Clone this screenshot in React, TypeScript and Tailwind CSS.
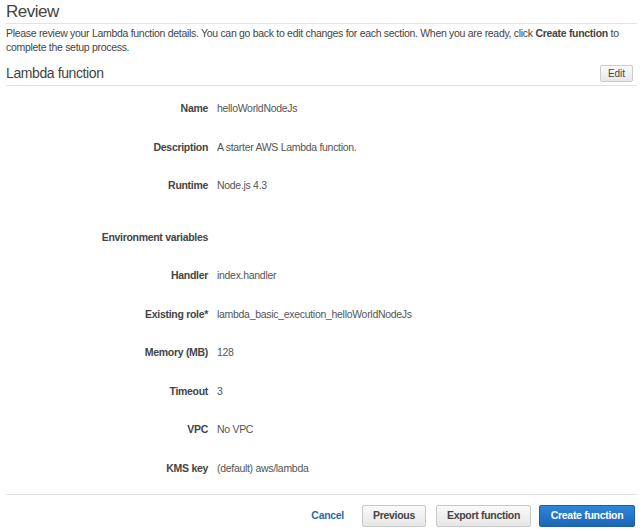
import React from "react";

const rows: { label: string; value: string; extra?: boolean }[] = [
  { label: "Name", value: "helloWorldNodeJs" },
  { label: "Description", value: "A starter AWS Lambda function." },
  { label: "Runtime", value: "Node.js 4.3" },
  { label: "Environment variables", value: "", extra: true },
  { label: "Handler", value: "index.handler" },
  { label: "Existing role*", value: "lambda_basic_execution_helloWorldNodeJs" },
  { label: "Memory (MB)", value: "128" },
  { label: "Timeout", value: "3" },
  { label: "VPC", value: "No VPC" },
  { label: "KMS key", value: "(default) aws/lambda" },
];

export default function App() {
  return (
    <div
      className="min-h-[531px] w-full bg-white px-[6px] text-[10.5px] tracking-[-0.3px] text-[#444]"
      style={{ fontFamily: '"Liberation Sans", Arial, sans-serif' }}
    >
      <h1 className="pt-[1px] text-[17px] leading-[22px] tracking-[-0.5px] text-[#444]">Review</h1>
      <div className="border-t border-[#e3e3e3]" />
      <p className="mt-[2px] leading-[14px] text-[#444]">
        Please review your Lambda function details. You can go back to edit changes for each section. When you are ready, click{" "}
        <b>Create function</b> to complete the setup process.
      </p>

      <div className="mt-[10px] flex items-center justify-between pb-[3px]">
        <h2 className="text-[14px] leading-[18px] tracking-[-0.4px] text-[#444]">Lambda function</h2>
        <button className="mr-[4px] h-[17px] w-[33px] rounded-[2px] border border-[#ccc] bg-gradient-to-b from-[#fafafa] to-[#e8e8e8] text-[10px] leading-[15px] tracking-normal text-[#444]">
          Edit
        </button>
      </div>
      <div className="border-t border-[#e3e3e3]" />

      <div className="pt-[3.5px]">
        {rows.map((r) => (
          <div
            key={r.label}
            className={
              r.extra
                ? "flex h-[51.4px] items-center pt-[12.8px]"
                : "flex h-[38.6px] items-center"
            }
          >
            <div className="w-[202px] text-right font-bold text-[#444]">{r.label}</div>
            <div className="pl-[9px] text-[#555]">{r.value}</div>
          </div>
        ))}
      </div>

      <div className="mt-[6px] border-t border-[#e3e3e3]" />
      <div className="flex items-center justify-end pt-[10px] pr-[2px]">
        <button className="mr-[18px] font-bold text-[#2a6bb0]">Cancel</button>
        <button className="mr-[10px] h-[22px] w-[64px] rounded-[2px] border border-[#c8c8c8] bg-gradient-to-b from-[#fafafa] to-[#e6e6e6] font-bold text-[#444]">
          Previous
        </button>
        <button className="mr-[8px] h-[22px] w-[95px] rounded-[2px] border border-[#c8c8c8] bg-gradient-to-b from-[#fafafa] to-[#e6e6e6] font-bold text-[#444]">
          Export function
        </button>
        <button className="h-[22px] w-[96px] rounded-[2px] border border-[#1a5ea8] bg-gradient-to-b from-[#2f86d8] to-[#1b66b8] font-bold text-white">
          Create function
        </button>
      </div>
    </div>
  );
}
